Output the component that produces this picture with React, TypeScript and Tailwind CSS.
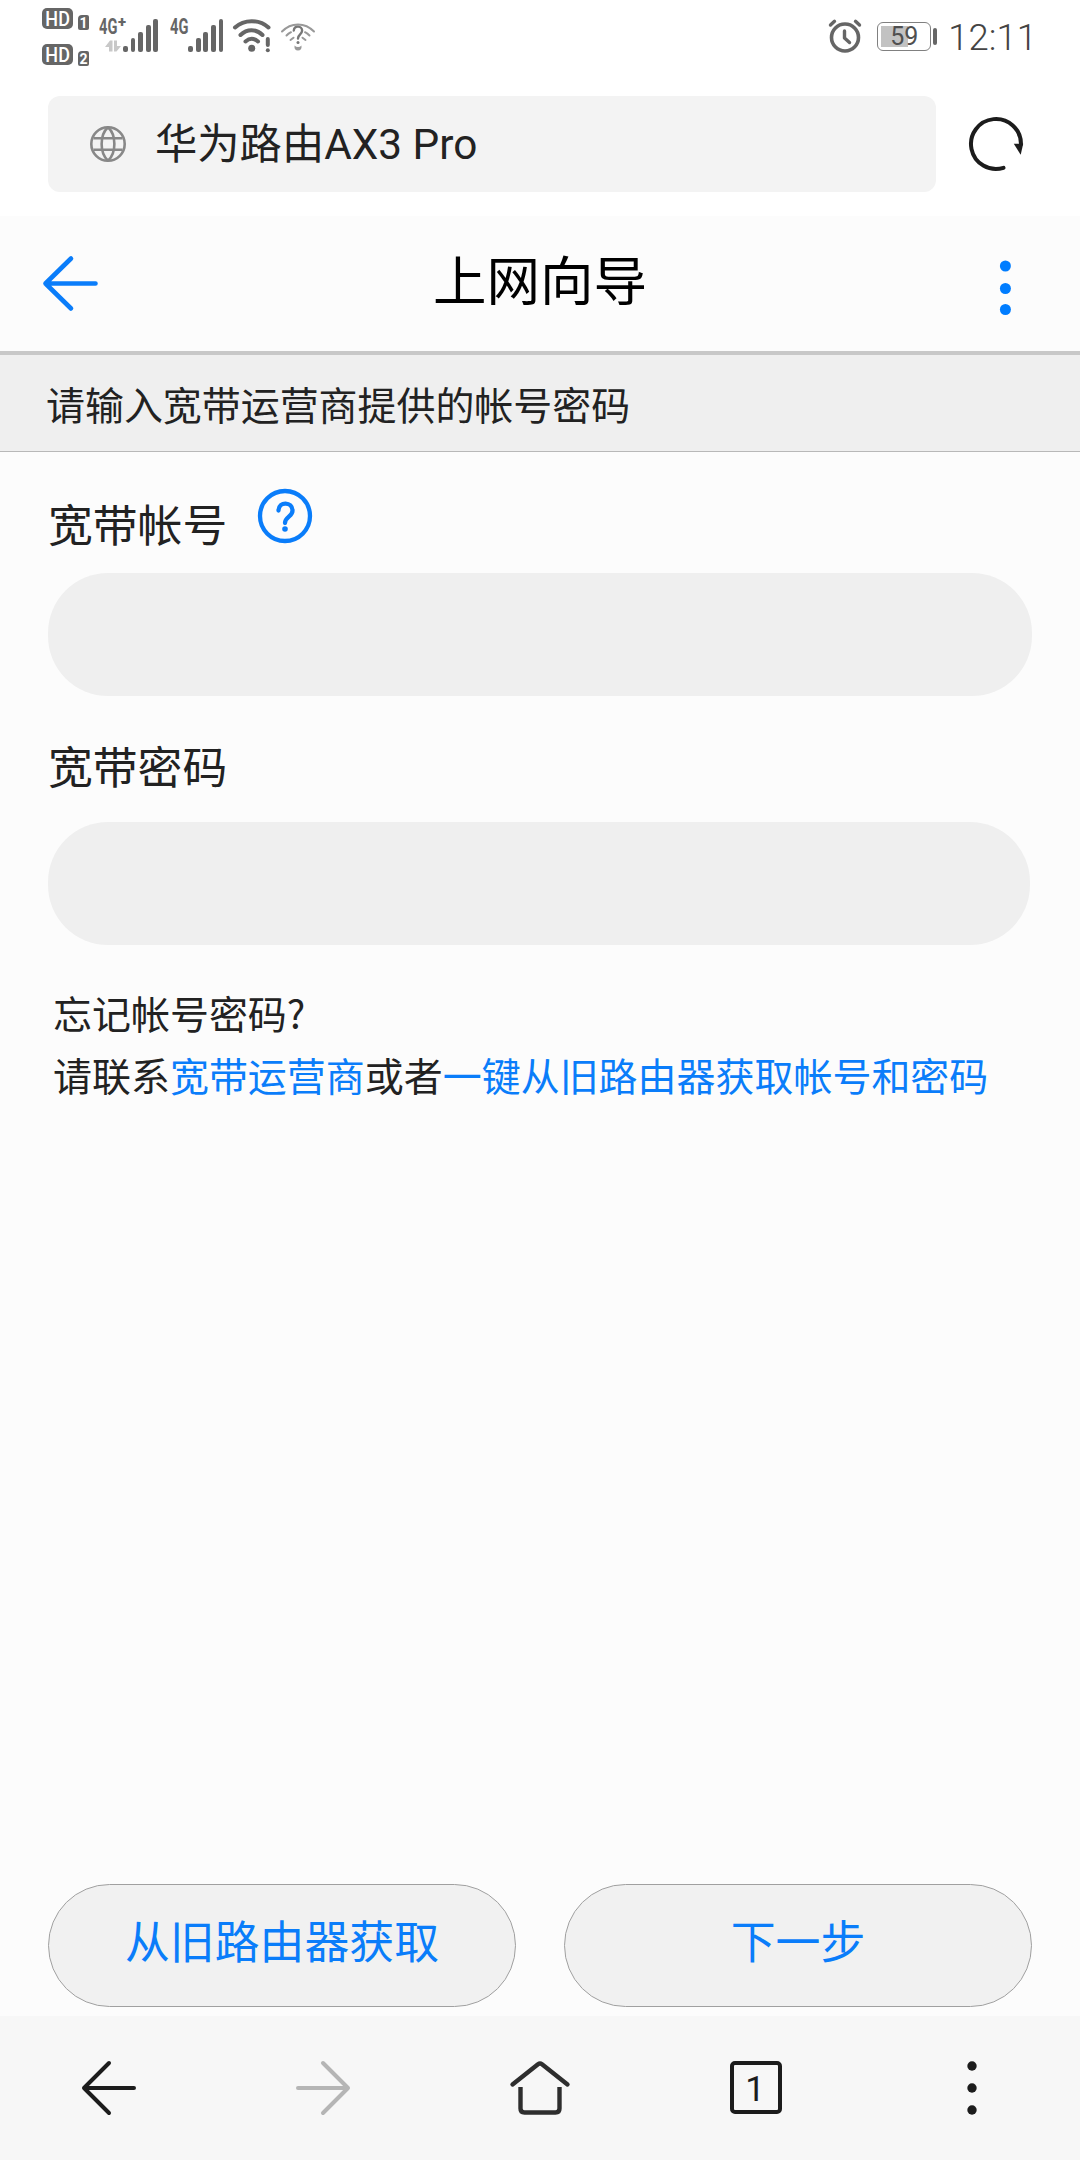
import { useState } from 'react';

const CARRIER_BARS = [6, 14, 20, 27, 33];

function HdBadge({ sim }: { sim: number }) {
  return (
    <div className="flex items-end gap-[5px]">
      <div className="flex h-[21px] w-[31px] items-center justify-center rounded-[5px] bg-[#666] pt-px text-[20px] leading-none font-medium text-white">
        <span className="scale-x-[0.9]">HD</span>
      </div>
      <div className="-mb-px flex h-[15px] w-[11px] items-center justify-center rounded-[2px] rounded-tl-[4px] bg-[#666] text-[14px] leading-none font-bold text-white">
        {sim}
      </div>
    </div>
  );
}

function SignalBars() {
  return (
    <div className="flex h-[33px] items-end gap-[2.700px]">
      {CARRIER_BARS.map((h) => (
        <span key={h} className="w-[4.900px] rounded-[2px] bg-[#666]" style={{ height: h }} />
      ))}
    </div>
  );
}

function StatusBar() {
  return (
    <div className="flex h-[72px] items-start justify-between pr-[43px] pl-[42px] text-[#666]">
      <div className="flex items-start">
        <div className="flex flex-col gap-[15px] pt-2">
          <HdBadge sim={1} />
          <HdBadge sim={2} />
        </div>

        <div className="flex pt-[19px] pl-[10px]">
          <div className="flex w-[24px] flex-col">
            <div className="flex h-[16px] items-center">
              <span className="w-[19px] origin-left scale-x-[0.68] text-[21.500px] leading-none font-bold">4G</span>
              <span className="-mt-[10px] text-[15px] leading-none font-black">+</span>
            </div>
            <svg width="16" height="12" viewBox="0 0 16 12" className="mt-[5px] ml-[6px]" fill="#c8c8c8">
              <path d="M0 7 5 .5h2.500v11H4V7z" />
              <path d="M9 .5h3V6h4l-4.500 5.500H9z" />
            </svg>
          </div>
          <SignalBars />
          <div className="ml-[12px] w-[18px]">
            <div className="flex h-[16px] w-[18px] items-center">
              <span className="origin-left scale-x-[0.68] text-[21.500px] leading-none font-bold">4G</span>
            </div>
          </div>
          <SignalBars />
        </div>

        <svg width="40" height="36" viewBox="0 0 40 36" className="mt-[18px] ml-[9px]" fill="none" stroke="#666" strokeWidth="4" strokeLinecap="round">
          <path d="M3 9.500c9-8.500 24.500-8.500 33.500 0" />
          <path d="M8.500 17c6.500-6.500 15.500-6.500 22 0" />
          <path d="M13.500 23.500c4-3.500 8.500-3.500 12.500 0" />
          <circle cx="19.700" cy="30.300" r="3.500" fill="#666" stroke="none" />
          <path d="M35.800 21v6" />
          <circle cx="35.800" cy="32.300" r="2" fill="#666" stroke="none" />
        </svg>

        <svg width="36" height="30" viewBox="0 0 36 30" className="mt-[22px] ml-[8px]" fill="none" stroke="#999" strokeWidth="2" strokeLinecap="round">
          <path d="M2 9.500C11 0 25 0 34 9.500" />
          <path d="M6.500 13.500c1.500-1.500 3-2.500 4.500-3.300M29.500 13.500c-1.500-1.500-3-2.500-4.500-3.300M10.500 18l3-2.300M25.500 18l-3-2.300" />
          <path d="M13.800 8.500c.5-5.500 8.500-5 8.300.3-.2 3.700-4.100 3.500-4.100 7.700" stroke="#777" strokeWidth="2.400" />
          <circle cx="18" cy="20.500" r="1.500" fill="#777" stroke="none" />
          <path d="M14.500 23.500q1.500 1.500 3.500 1.500t3.500-1.500q.5 5-3.500 5t-3.500-5z" fill="#999" stroke="none" />
        </svg>
      </div>

      <div className="flex items-start">
        <svg width="36" height="36" viewBox="0 0 36 36" className="mt-[18px]" fill="none" stroke="#666" strokeLinecap="round">
          <circle cx="18" cy="19.500" r="13.500" strokeWidth="3.600" />
          <path d="M17.500 13v7l5 4.500" strokeWidth="3.400" strokeLinejoin="round" />
          <path d="m3.500 7 4-3.700M32.500 7l-4-3.700" strokeWidth="3.400" />
        </svg>
        <div className="mt-[22px] ml-[14px] flex h-[29px] w-[54px] items-center rounded-[6px] border-[1.500px] border-[#808080] p-[3px]">
          <div className="flex h-full w-full items-center justify-center bg-[linear-gradient(to_right,#c2c2c2_58%,transparent_58%)] text-[25px] leading-none text-[#505050]">
            59
          </div>
        </div>
        <div className="mt-[28px] ml-[2px] h-[17px] w-[4px] rounded-[2px] bg-[#666]" />
        <div className="mt-[16px] ml-[11px] text-[36.500px] leading-[44px] font-light text-[#444]">12:11</div>
      </div>
    </div>
  );
}

function AddressBar() {
  return (
    <div className="flex h-[144px] items-start pt-6 pl-12">
      <div className="flex h-24 w-[888px] items-center rounded-[12px] bg-[#f3f3f3] pl-[42px]">
        <svg width="36" height="36" viewBox="0 0 36 36" fill="none" stroke="#888" strokeWidth="2.600">
          <circle cx="18" cy="18" r="16.700" />
          <path d="M18 1.300C9.500 9 9.500 27 18 34.700M18 1.300c8.500 7.700 8.500 25.700 0 33.400M3.500 12.300h29M3.500 23.700h29" />
        </svg>
        <span className="pt-[2px] pl-[29px] text-[42.300px] leading-none text-[#222]">华为路由AX3 Pro</span>
      </div>
      <svg width="58" height="58" viewBox="0 0 58 58" className="mt-[19px] ml-[31px]" fill="none" stroke="#1c1c1c" strokeWidth="4" strokeLinecap="round">
        <path d="M36.500 52.850A25 25 0 1 1 54 29" />
        <path d="M46.800 28.800h9.400l-2.500 11z" fill="#1c1c1c" stroke="none" />
      </svg>
    </div>
  );
}

function PageHeader() {
  return (
    <header className="flex h-[139px] items-start justify-between border-b-4 border-[#c8c8c8] pr-[67px] pl-[42px]">
      <svg width="58" height="58" viewBox="0 0 58 58" className="mt-[39px]" fill="none" stroke="#0a7dfa" strokeWidth="4.600" strokeLinecap="round" strokeLinejoin="round">
        <path d="M29 3.500 3.500 28.500 29 53.500M3.500 28.500h50" />
      </svg>
      <h1 className="pt-[27px] pr-[17px] text-[53.500px] leading-[80px] text-black">上网向导</h1>
      <svg width="16" height="60" viewBox="0 0 16 60" className="mt-[43px]" fill="#007dff">
        <circle cx="8.400" cy="7" r="5.500" />
        <circle cx="8.400" cy="29.500" r="5.500" />
        <circle cx="8.400" cy="50.500" r="5.500" />
      </svg>
    </header>
  );
}

function NavBar() {
  return (
    <nav className="flex h-36 items-center justify-around bg-[#f7f7f7] pb-px">
      <div className="flex w-[216px] justify-center">
        <svg width="60" height="60" viewBox="0 0 60 60" fill="none" stroke="#1c1c1c" strokeWidth="4" strokeLinecap="round" strokeLinejoin="round">
          <path d="M31 5 6 30l25 25M6 30h50" />
        </svg>
      </div>
      <div className="flex w-[216px] justify-center">
        <svg width="60" height="60" viewBox="0 0 60 60" fill="none" stroke="#b5b5b5" strokeWidth="4" strokeLinecap="round" strokeLinejoin="round">
          <path d="m29 5 25 25-25 25M54 30H4" />
        </svg>
      </div>
      <div className="flex w-[216px] justify-center">
        <svg width="64" height="60" viewBox="0 0 64 60" fill="none" stroke="#2e2e2e" strokeWidth="4.400" strokeLinecap="round" strokeLinejoin="round">
          <path d="M4.500 26.500 30 6.200q2-1.500 4 0l25.500 20.300" />
          <path d="M12.500 29v21.500q0 4 4 4h31q4 0 4-4V29" strokeLinecap="butt" />
        </svg>
      </div>
      <div className="flex w-[216px] justify-center">
        <div className="flex h-[53px] w-[52px] items-center justify-center rounded-[5px] border-4 border-[#1c1c1c] pt-[4px] pr-[2px] text-[35px] leading-none text-[#1c1c1c]">
          1
        </div>
      </div>
      <div className="flex w-[216px] justify-center">
        <svg width="12" height="56" viewBox="0 0 12 56" fill="#1c1c1c">
          <circle cx="6" cy="6" r="4.700" />
          <circle cx="6" cy="28" r="4.700" />
          <circle cx="6" cy="50" r="4.700" />
        </svg>
      </div>
    </nav>
  );
}

export default function App() {
  const [account, setAccount] = useState('');
  const [password, setPassword] = useState('');

  return (
    <div className="flex h-[2160px] w-[1080px] flex-col overflow-hidden bg-white font-[Roboto,'Noto_Sans_CJK_SC',sans-serif]">
      <StatusBar />
      <AddressBar />

      <main className="flex flex-1 flex-col bg-[#fcfcfc] text-[#222]">
        <PageHeader />
        <div className="flex h-[98px] flex-col">
          <p className="flex h-[97px] items-center border-b border-[#b8b8b8] bg-[#efefef] pt-[9px] pl-[46px] text-[38.950px] leading-none">
            请输入宽带运营商提供的帐号密码
          </p>
        </div>

        <div className="flex flex-col px-12">
          <div className="flex h-[120px] items-start">
            <label className="pt-[41px] text-[44.800px] leading-[66px]">宽带帐号</label>
            <svg width="56" height="56" viewBox="0 0 56 56" className="mt-[35px] ml-[30px]" fill="none" stroke="#0a7dfa" strokeWidth="4.300" strokeLinecap="round">
              <circle cx="28" cy="28" r="25" />
              <path d="M21.500 22.500c.3-9.500 14-9 14 .2 0 5.800-7.500 6-7.500 12.300" />
              <circle cx="28" cy="41" r="2.800" fill="#0a7dfa" stroke="none" />
            </svg>
          </div>
          <input
            value={account}
            onChange={(e) => setAccount(e.target.value)}
            className="h-[123px] w-[984px] rounded-[60px] bg-[#efefef] px-12 text-[44px] outline-none"
          />

          <label className="h-[126px] pt-[40px] text-[44.800px] leading-[66px]">宽带密码</label>
          <input
            type="password"
            value={password}
            onChange={(e) => setPassword(e.target.value)}
            className="h-[123px] w-[982px] rounded-[60px] bg-[#efefef] px-12 text-[44px] outline-none"
          />

          <div className="pt-[36px] pl-[5px] font-['Noto_Sans_CJK_SC',sans-serif] text-[38.980px] leading-[62px] whitespace-nowrap">
            <p>忘记帐号密码?</p>
            <p>
              请联系<a className="text-[#0a7dfa]">宽带运营商</a>或者<a className="text-[#0a7dfa]">一键从旧路由器获取帐号和密码</a>
            </p>
          </div>
        </div>

        <div className="mt-auto flex justify-between px-12 pb-[9px] text-[44.900px] text-[#0a7dfa]">
          <button className="h-[123px] w-[468px] rounded-full border border-[#a0a0a0] bg-[#f1f1f1] pb-[3px] leading-none">从旧路由器获取</button>
          <button className="h-[123px] w-[468px] rounded-full border border-[#a0a0a0] bg-[#f1f1f1] pb-[3px] leading-none">下一步</button>
        </div>
      </main>

      <NavBar />
    </div>
  );
}
